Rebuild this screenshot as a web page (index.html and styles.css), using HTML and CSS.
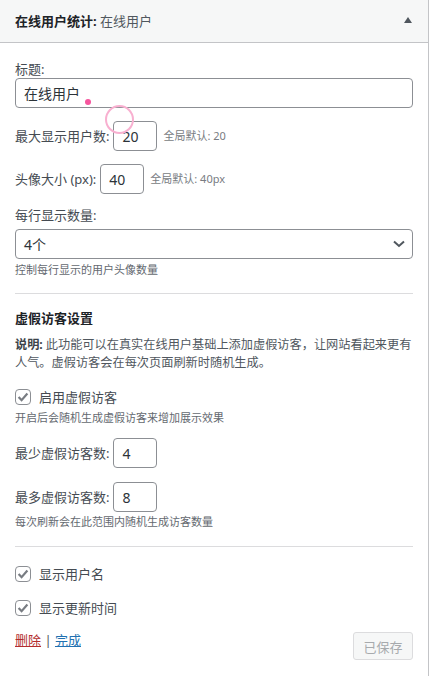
FILE: index.html
```html
<!DOCTYPE html>
<html lang="zh-CN">
<head>
<meta charset="utf-8">
<title>在线用户统计</title>
<link rel="stylesheet" href="styles.css">
</head>
<body>
<div class="widget">
  <div class="widget-top">
    <h3 class="widget-title"><strong>在线用户统计:</strong> <span class="in-title">在线用户</span></h3>
    <span class="toggle"></span>
  </div>
  <div class="widget-inside">
    <label class="label l-title">标题:</label>
    <input class="input wide" type="text" value="在线用户">

    <div class="row r-max">
      <label class="label">最大显示用户数:</label>
      <input class="input num" type="text" value="20">
      <span class="hint">全局默认: 20</span>
    </div>

    <div class="row r-avatar">
      <label class="label">头像大小 (px):</label>
      <input class="input num" type="text" value="40">
      <span class="hint">全局默认: 40px</span>
    </div>

    <label class="label l-perrow">每行显示数量:</label>
    <div class="select">
      <span>4个</span>
      <svg class="chev" width="12" height="8" viewBox="0 0 12 8"><path d="M1 1.5 L6 6 L11 1.5" fill="none" stroke="#50575e" stroke-width="2"/></svg>
    </div>
    <p class="desc d-perrow">控制每行显示的用户头像数量</p>

    <hr class="sep s1">

    <h4 class="section">虚假访客设置</h4>
    <p class="note"><strong>说明:</strong>此功能可以在真实在线用户基础上添加虚假访客，让网站看起来更有人气。虚假访客会在每次页面刷新时随机生成。</p>

    <div class="check c-fake">
      <span class="cb"><svg width="14" height="14" viewBox="0 0 14 14"><path d="M2.6 7 L5.6 10.2 L11.4 3.6" fill="none" stroke="#787c82" stroke-width="2.2"/></svg></span>
      <span class="check-label">启用虚假访客</span>
    </div>
    <p class="desc d-fake">开启后会随机生成虚假访客来增加展示效果</p>

    <div class="row r-min">
      <label class="label">最少虚假访客数:</label>
      <input class="input num" type="text" value="4">
    </div>
    <div class="row r-maxfake">
      <label class="label">最多虚假访客数:</label>
      <input class="input num" type="text" value="8">
    </div>
    <p class="desc d-range">每次刷新会在此范围内随机生成访客数量</p>

    <hr class="sep s2">

    <div class="check c-name">
      <span class="cb"><svg width="14" height="14" viewBox="0 0 14 14"><path d="M2.6 7 L5.6 10.2 L11.4 3.6" fill="none" stroke="#787c82" stroke-width="2.2"/></svg></span>
      <span class="check-label">显示用户名</span>
    </div>
    <div class="check c-time">
      <span class="cb"><svg width="14" height="14" viewBox="0 0 14 14"><path d="M2.6 7 L5.6 10.2 L11.4 3.6" fill="none" stroke="#787c82" stroke-width="2.2"/></svg></span>
      <span class="check-label">显示更新时间</span>
    </div>

    <div class="actions">
      <div class="links"><a class="delete" href="#">删除</a> <span class="bar">|</span> <a class="done" href="#">完成</a></div>
      <button class="saved" type="button" disabled>已保存</button>
    </div>
  </div>
</div>
<span class="touch-dot"></span>
<span class="touch-ring"></span>
</body>
</html>
```
FILE: styles.css
```css
* { box-sizing: border-box; }
html, body { margin: 0; padding: 0; background: #fff; }
body {
  position: relative;
  width: 432px;
  height: 676px;
  overflow: hidden;
  font-family: "Noto Sans", "Noto Sans CJK SC", sans-serif;
  color: #454b52;
  font-size: 13px;
}
.widget {
  width: 429px;
  min-height: 676px;
  border-right: 1px solid #c3c4c7;
  background: #fff;
}
.widget-top {
  height: 43px;
  background: #f6f7f7;
  border-bottom: 1px solid #c3c4c7;
  display: flex;
  align-items: center;
  justify-content: space-between;
  padding: 0 16px 1px 15px;
}
.widget-title {
  margin: 0;
  font-size: 13px;
  line-height: 18px;
  font-weight: 400;
  color: #1d2327;
}
.widget-title strong { font-weight: 700; }
.in-title { color: #50575e; }
.toggle {
  width: 0;
  height: 0;
  border-left: 4px solid transparent;
  border-right: 4px solid transparent;
  border-bottom: 6px solid #50575e;
  margin-top: -2px;
}
.widget-inside {
  padding: 17px 15px 15px 15px;
  display: flex;
  flex-direction: column;
  align-items: stretch;
}
.label {
  display: block;
  font-size: 13px;
  line-height: 18px;
  color: #454b52;
}
.input {
  height: 30px;
  padding: 0 8px;
  border: 1px solid #8c8f94;
  border-radius: 4px;
  font-family: "Noto Sans", "Noto Sans CJK SC", sans-serif;
  font-size: 14px;
  color: #2c3338;
  background: #fff;
  outline: none;
  margin: 0;
}
.wide { width: 100%; }
.num { width: 44px; flex: none; }
.row {
  display: flex;
  align-items: center;
  height: 30px;
}
.row .label { margin-right: 4px; }
.hint {
  font-size: 11px;
  color: #787c82;
  margin-left: 6px;
  line-height: 16px;
}
.r-max { margin-top: 13px; }
.r-avatar { margin-top: 13px; }
.l-perrow { margin-top: 12px; }
.select {
  margin-top: 5px;
  height: 30px;
  border: 1px solid #8c8f94;
  border-radius: 4px;
  display: flex;
  align-items: center;
  justify-content: space-between;
  padding: 0 7px 0 8px;
  font-size: 14px;
  color: #2c3338;
}
.chev { display: block; }
.desc {
  margin: 0;
  font-size: 11px;
  line-height: 16px;
  color: #646970;
}
.d-perrow { margin-top: 3px; }
.sep {
  margin: 0;
  border: 0;
  border-top: 1px solid #dcdcde;
  height: 0;
}
.s1 { margin-top: 15px; }
.section {
  margin: 15px 0 0;
  font-size: 13px;
  line-height: 18px;
  font-weight: 700;
  color: #1d2327;
}
.note {
  margin: 9px 0 0;
  font-size: 12.2px;
  line-height: 18px;
  color: #50575e;
}
.note strong { color: #3c434a; font-weight: 700; margin-right: 3px; }
.check {
  display: flex;
  align-items: center;
  height: 18px;
}
.cb {
  width: 16px;
  height: 16px;
  border: 1px solid #8c8f94;
  border-radius: 4px;
  display: flex;
  align-items: center;
  justify-content: center;
  margin-right: 8px;
  background: #fff;
}
.cb svg { display: block; }
.check-label {
  font-size: 13px;
  line-height: 18px;
  color: #454b52;
}
.c-fake { margin-top: 16px; }
.d-fake { margin-top: 4px; }
.r-min { margin-top: 12px; }
.r-maxfake { margin-top: 14px; }
.d-range { margin-top: 2px; }
.s2 { margin-top: 16px; }
.c-name { margin-top: 18px; }
.c-time { margin-top: 16px; }
.actions {
  margin-top: 15px;
  display: flex;
  justify-content: space-between;
  align-items: flex-start;
}
.links {
  font-size: 13px;
  line-height: 16px;
}
.delete { color: #b32d2e; text-decoration: underline; }
.done { color: #2271b1; text-decoration: underline; }
.bar { color: #50575e; }
.saved {
  width: 60px;
  height: 28px;
  border: 1px solid #dcdcde;
  border-radius: 3px;
  background: #f6f7f7;
  color: #a7aaad;
  font-family: "Noto Sans", "Noto Sans CJK SC", sans-serif;
  font-size: 13px;
  padding: 0;
}
.touch-dot {
  position: absolute;
  left: 85px;
  top: 99px;
  width: 6px;
  height: 6px;
  border-radius: 50%;
  background: #f6559e;
}
.touch-ring {
  position: absolute;
  left: 105px;
  top: 105px;
  width: 29px;
  height: 29px;
  border-radius: 50%;
  border: 2px solid #f8b0d0;
}
```
